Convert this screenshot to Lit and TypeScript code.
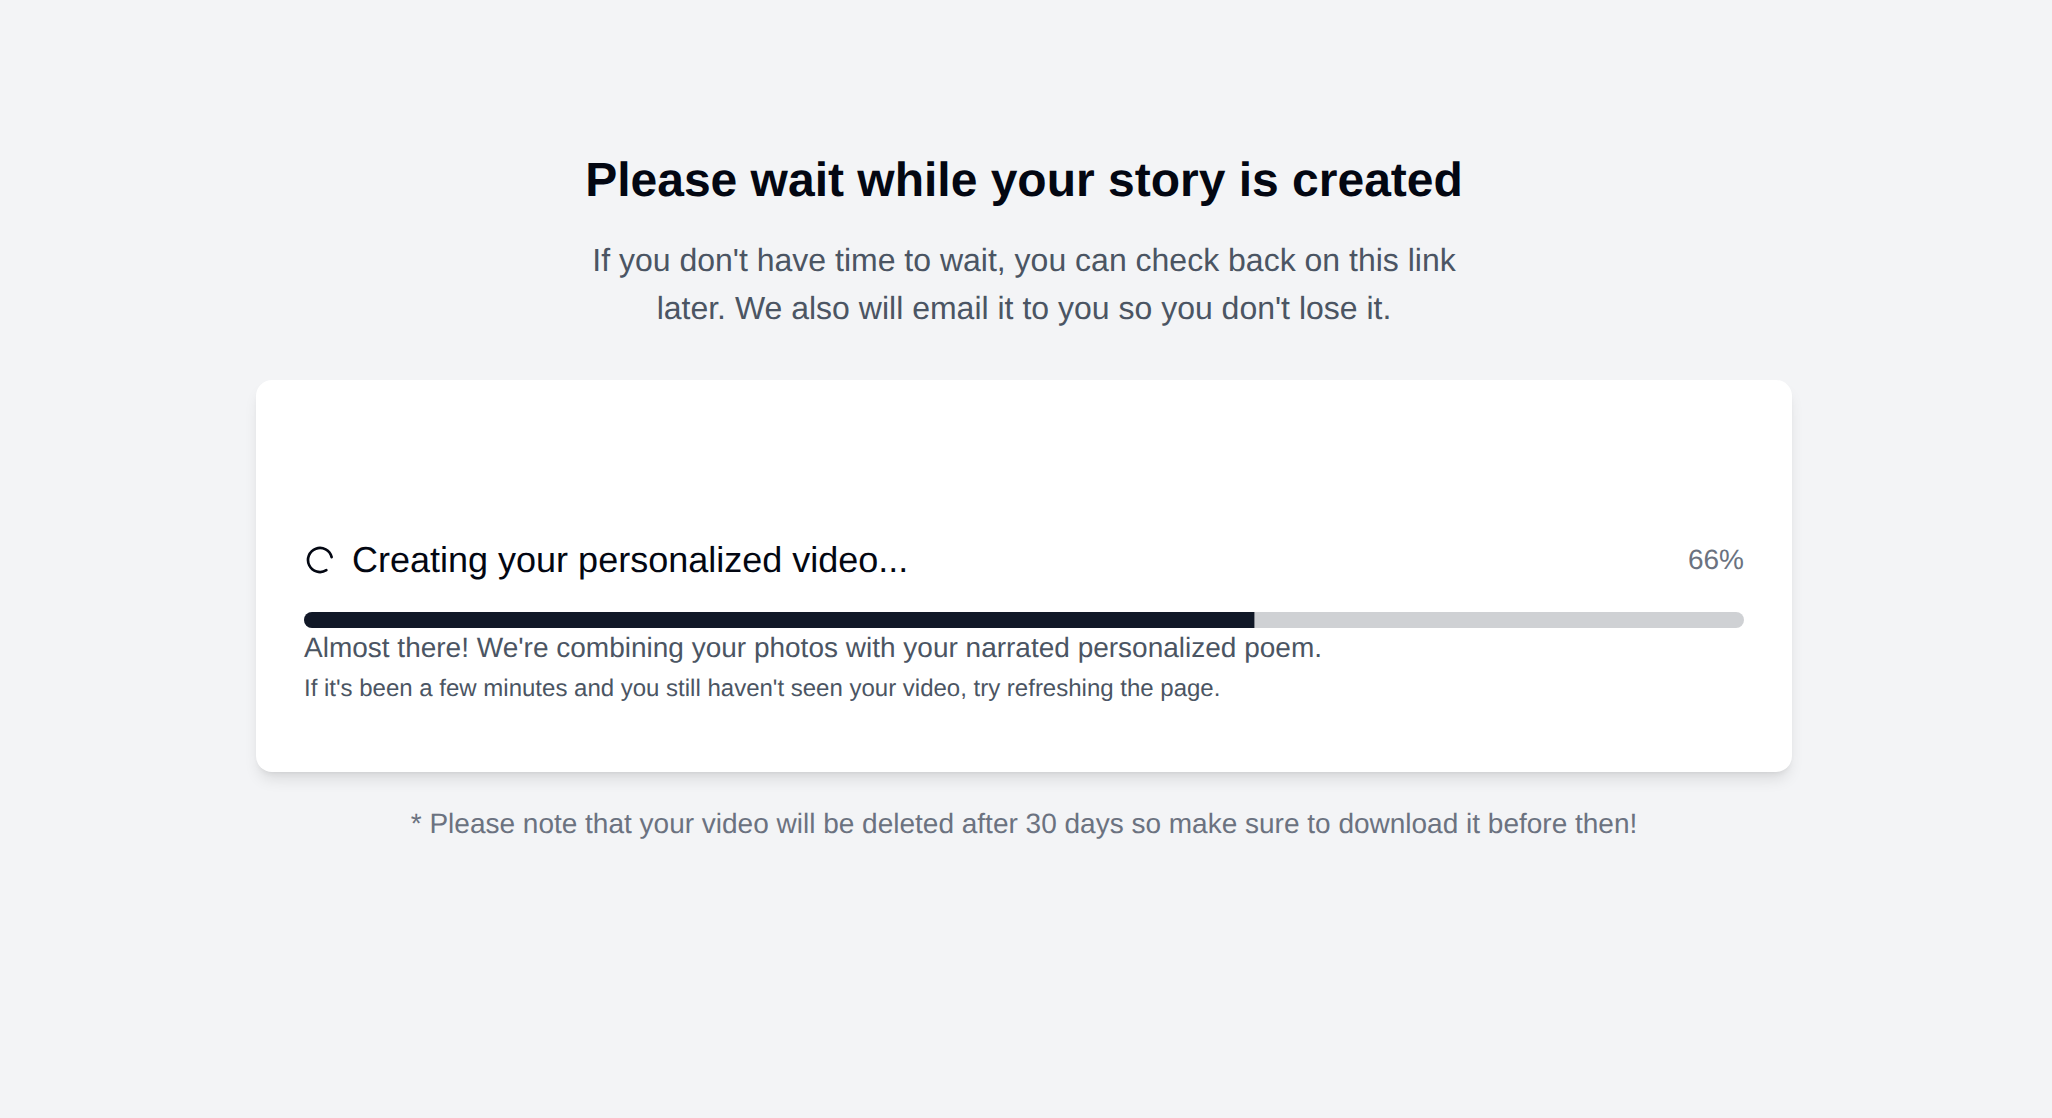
import {LitElement, css, html} from "lit";
import {customElement} from "lit/decorators.js";

@customElement("app-root")
export class AppRoot extends LitElement {
  private progress = 66;

  static override styles = css`
    :host {
      display: block;
      min-height: 1118px;
      background: #f3f4f6;
      font-family: "Liberation Sans", Arial, sans-serif;
      text-rendering: geometricPrecision;
    }

    .page {
      display: flex;
      flex-direction: column;
      align-items: center;
      padding: 157px 4px 0 0;
    }

    h1 {
      margin: 0;
      font-size: 48px;
      line-height: 48px;
      font-weight: 700;
      color: #030712;
      text-align: center;
    }

    .lead {
      margin: 31px 0 0;
      width: 896px;
      font-size: 32px;
      line-height: 48px;
      color: #4b5563;
      text-align: center;
    }

    .card {
      box-sizing: border-box;
      width: 1536px;
      height: 392px;
      margin-top: 48px;
      padding: 48px 48px 67px;
      display: flex;
      flex-direction: column;
      justify-content: flex-end;
      background: #fff;
      border-radius: 16px;
      box-shadow: 0 10px 15px -3px rgba(0, 0, 0, 0.1), 0 4px 6px -4px rgba(0, 0, 0, 0.1);
    }

    .status {
      display: flex;
      justify-content: space-between;
      align-items: center;
      margin-bottom: 32px;
    }

    .label {
      display: flex;
      align-items: center;
      gap: 16px;
      font-size: 36px;
      line-height: 40px;
      color: #030712;
    }

    .spinner {
      width: 32px;
      height: 32px;
      display: block;
      transform: rotate(58deg);
    }

    .percent {
      font-size: 28px;
      line-height: 40px;
      color: #6b7280;
    }

    .track {
      height: 16px;
      border-radius: 8px;
      background: rgba(17, 24, 39, 0.2);
      overflow: hidden;
    }

    .fill {
      height: 100%;
      background: #111827;
    }

    .message {
      margin: 4px 0 0;
      font-size: 28px;
      line-height: 32px;
      color: #4b5563;
    }

    .hint {
      margin: 9px 0 0;
      font-size: 24px;
      line-height: 32px;
      color: #4b5563;
    }

    .note {
      margin: 32px 0 0;
      font-size: 28px;
      line-height: 40px;
      color: #6b7280;
      text-align: center;
    }
  `;

  override render() {
    return html`
      <div class="page">
        <h1>Please wait while your story is created</h1>
        <p class="lead">If you don't have time to wait, you can check back on this link later. We also will email it to you so you don't lose it.</p>
        <div class="card">
          <div class="status">
            <div class="label">
              <svg class="spinner" viewBox="0 0 24 24" fill="none" stroke="currentColor" stroke-width="2" stroke-linecap="round" stroke-linejoin="round">
                <path d="M21 12a9 9 0 1 1-6.219-8.56"></path>
              </svg>
              <span>Creating your personalized video...</span>
            </div>
            <span class="percent">${this.progress}%</span>
          </div>
          <div class="track"><div class="fill" style="transform: translateX(${this.progress - 100}%)"></div></div>
          <p class="message">Almost there! We're combining your photos with your narrated personalized poem.</p>
          <p class="hint">If it's been a few minutes and you still haven't seen your video, try refreshing the page.</p>
        </div>
        <p class="note">* Please note that your video will be deleted after 30 days so make sure to download it before then!</p>
      </div>
    `;
  }
}
